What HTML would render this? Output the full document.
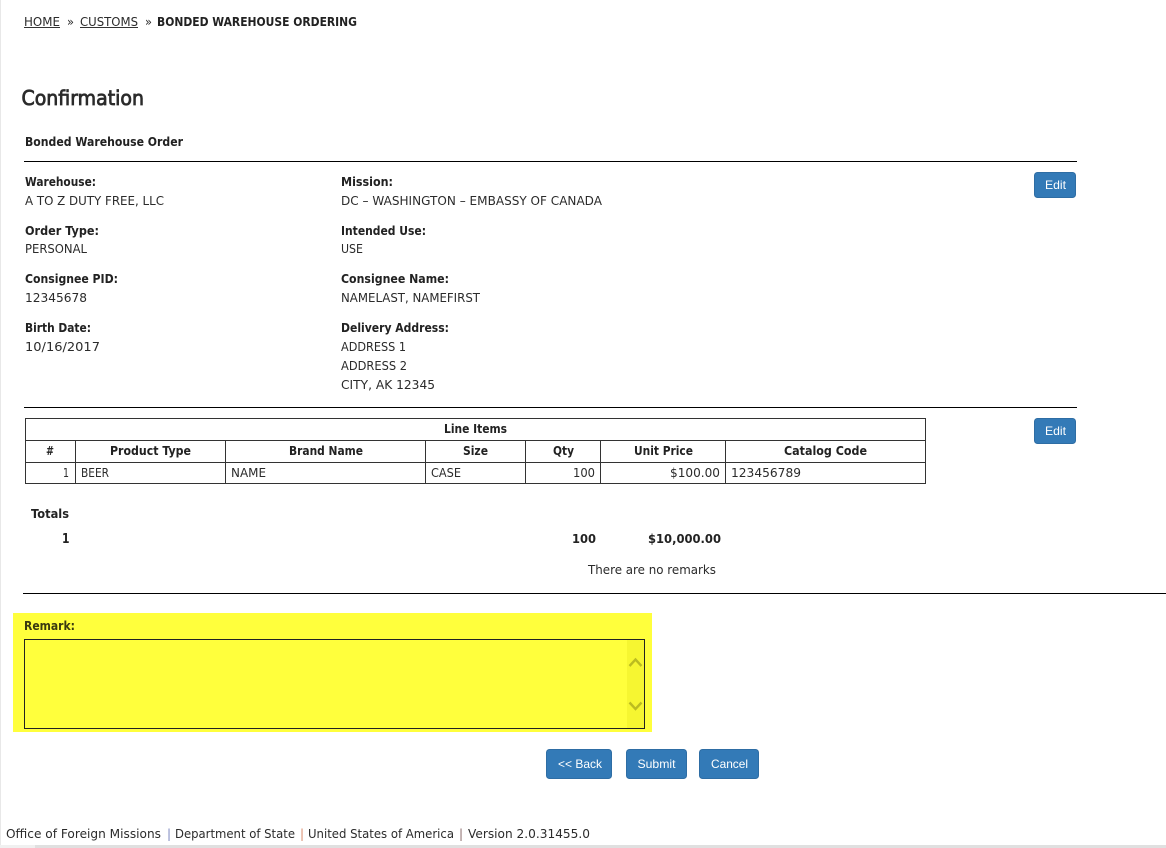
<!DOCTYPE html>
<html lang="en">
<head>
<meta charset="utf-8">
<title>Confirmation</title>
<style>
html,body{margin:0;padding:0;background:#fff;width:1166px;height:848px;overflow:hidden}
svg{display:block;position:absolute;left:0;top:0}
text{font-family:"DejaVu Sans",sans-serif;font-size:12px;fill:#2b2b2b}
.b{font-weight:bold;fill:#222}
.btn{font-family:"Liberation Sans",sans-serif;fill:#fff;font-size:12px}
.bt{fill:#337ab7;stroke:#2e6da4}
</style>
</head>
<body>
<svg width="1166" height="848" viewBox="0 0 1166 848" xmlns="http://www.w3.org/2000/svg">
<rect x="0" y="0" width="1" height="848" fill="#e8e8e8"/>
<rect x="0" y="845" width="1166" height="3" fill="#e0e0e0"/>
<rect x="0" y="845" width="35" height="3" fill="#f0f0f0"/>

<g>
<text x="24" y="26" textLength="36" lengthAdjust="spacingAndGlyphs">HOME</text>
<rect x="24" y="27" width="36" height="1" fill="#333"/>
<text x="67" y="26" textLength="7" lengthAdjust="spacingAndGlyphs" font-size="11">»</text>
<text x="80" y="26" textLength="58" lengthAdjust="spacingAndGlyphs">CUSTOMS</text>
<rect x="80" y="27" width="58" height="1" fill="#333"/>
<text x="145" y="26" textLength="7" lengthAdjust="spacingAndGlyphs" font-size="11">»</text>
<text class="b" x="157" y="26" textLength="200" lengthAdjust="spacingAndGlyphs">BONDED WAREHOUSE ORDERING</text>

<text x="21.500" y="105" textLength="122.500" lengthAdjust="spacingAndGlyphs" style="font-size:20px;fill:#2b2b2b;stroke:#2b2b2b;stroke-width:.8px">Confirmation</text>
<text class="b" x="25" y="146" textLength="158" lengthAdjust="spacingAndGlyphs">Bonded Warehouse Order</text>
<rect x="24" y="161" width="1053" height="1" fill="#000"/>

<text class="b" x="25" y="186" textLength="71" lengthAdjust="spacingAndGlyphs">Warehouse:</text>
<text x="25" y="205" textLength="139" lengthAdjust="spacingAndGlyphs">A TO Z DUTY FREE, LLC</text>
<text class="b" x="25" y="235" textLength="74" lengthAdjust="spacingAndGlyphs">Order Type:</text>
<text x="25" y="253" textLength="62" lengthAdjust="spacingAndGlyphs">PERSONAL</text>
<text class="b" x="25" y="283" textLength="93" lengthAdjust="spacingAndGlyphs">Consignee PID:</text>
<text x="25" y="302" textLength="62" lengthAdjust="spacingAndGlyphs">12345678</text>
<text class="b" x="25" y="332" textLength="66" lengthAdjust="spacingAndGlyphs">Birth Date:</text>
<text x="25" y="351" textLength="75" lengthAdjust="spacingAndGlyphs">10/16/2017</text>

<text class="b" x="341" y="186" textLength="52" lengthAdjust="spacingAndGlyphs">Mission:</text>
<text x="341" y="205" textLength="261" lengthAdjust="spacingAndGlyphs">DC – WASHINGTON – EMBASSY OF CANADA</text>
<text class="b" x="341" y="235" textLength="85" lengthAdjust="spacingAndGlyphs">Intended Use:</text>
<text x="341" y="253" textLength="22" lengthAdjust="spacingAndGlyphs">USE</text>
<text class="b" x="341" y="283" textLength="108" lengthAdjust="spacingAndGlyphs">Consignee Name:</text>
<text x="341" y="302" textLength="139" lengthAdjust="spacingAndGlyphs">NAMELAST, NAMEFIRST</text>
<text class="b" x="341" y="332" textLength="108" lengthAdjust="spacingAndGlyphs">Delivery Address:</text>
<text x="341" y="351" textLength="65" lengthAdjust="spacingAndGlyphs">ADDRESS 1</text>
<text x="341" y="370" textLength="66" lengthAdjust="spacingAndGlyphs">ADDRESS 2</text>
<text x="341" y="389" textLength="94" lengthAdjust="spacingAndGlyphs">CITY, AK 12345</text>

<rect x="1034.500" y="172.500" width="41" height="25" rx="3" class="bt"/>
<text class="btn" x="1045" y="189" textLength="21" lengthAdjust="spacingAndGlyphs">Edit</text>
<rect x="24" y="407" width="1053" height="1" fill="#000"/>
<rect x="1034.500" y="418.500" width="41" height="25" rx="3" class="bt"/>
<text class="btn" x="1045" y="435" textLength="21" lengthAdjust="spacingAndGlyphs">Edit</text>

<g fill="#333">
<rect x="25" y="418" width="901" height="1"/>
<rect x="25" y="440" width="901" height="1"/>
<rect x="25" y="462" width="901" height="1"/>
<rect x="25" y="483" width="901" height="1"/>
<rect x="25" y="418" width="1" height="66"/>
<rect x="925" y="418" width="1" height="66"/>
<rect x="75" y="440" width="1" height="44"/>
<rect x="225" y="440" width="1" height="44"/>
<rect x="425" y="440" width="1" height="44"/>
<rect x="525" y="440" width="1" height="44"/>
<rect x="600" y="440" width="1" height="44"/>
<rect x="725" y="440" width="1" height="44"/>
</g>
<text class="b" x="444" y="433" textLength="63" lengthAdjust="spacingAndGlyphs">Line Items</text>
<text class="b" x="46" y="455" textLength="8" lengthAdjust="spacingAndGlyphs">#</text>
<text class="b" x="110" y="455" textLength="81" lengthAdjust="spacingAndGlyphs">Product Type</text>
<text class="b" x="289" y="455" textLength="74" lengthAdjust="spacingAndGlyphs">Brand Name</text>
<text class="b" x="463" y="455" textLength="25" lengthAdjust="spacingAndGlyphs">Size</text>
<text class="b" x="553" y="455" textLength="21" lengthAdjust="spacingAndGlyphs">Qty</text>
<text class="b" x="634" y="455" textLength="59" lengthAdjust="spacingAndGlyphs">Unit Price</text>
<text class="b" x="784" y="455" textLength="83" lengthAdjust="spacingAndGlyphs">Catalog Code</text>
<text x="63" y="477" textLength="6" lengthAdjust="spacingAndGlyphs">1</text>
<text x="81" y="477" textLength="28" lengthAdjust="spacingAndGlyphs">BEER</text>
<text x="231" y="477" textLength="35" lengthAdjust="spacingAndGlyphs">NAME</text>
<text x="431" y="477" textLength="30" lengthAdjust="spacingAndGlyphs">CASE</text>
<text x="573" y="477" textLength="22" lengthAdjust="spacingAndGlyphs">100</text>
<text x="670" y="477" textLength="50" lengthAdjust="spacingAndGlyphs">$100.00</text>
<text x="731" y="477" textLength="70" lengthAdjust="spacingAndGlyphs">123456789</text>

<text class="b" x="31" y="518" textLength="38" lengthAdjust="spacingAndGlyphs">Totals</text>
<text class="b" x="62" y="543" textLength="7.500" lengthAdjust="spacingAndGlyphs" style="font-size:13px">1</text>
<text class="b" x="572" y="543" textLength="24" lengthAdjust="spacingAndGlyphs">100</text>
<text class="b" x="648" y="543" textLength="73" lengthAdjust="spacingAndGlyphs">$10,000.00</text>
<text x="588" y="574" textLength="128" lengthAdjust="spacingAndGlyphs">There are no remarks</text>
<rect x="23" y="593" width="1143" height="1" fill="#000"/>

<rect x="13" y="613" width="639" height="119" fill="#ffff3c"/>
<text class="b" x="24" y="630" textLength="51" lengthAdjust="spacingAndGlyphs" style="fill:#3a3a10">Remark:</text>
<rect x="627" y="640" width="17" height="88" fill="#f6f631"/>
<rect x="24.500" y="639.500" width="620" height="89" fill="none" stroke="#222"/>
<path d="M629.500 666 L635.500 659.500 L641.500 666" fill="none" stroke="#bcbc20" stroke-width="2.400"/>
<path d="M629.500 702.500 L635.500 709 L641.500 702.500" fill="none" stroke="#bcbc20" stroke-width="2.400"/>

<rect x="546.500" y="749.500" width="65" height="29" rx="3" class="bt"/>
<text class="btn" x="558" y="768" textLength="44" lengthAdjust="spacingAndGlyphs">&lt;&lt; Back</text>
<rect x="626.500" y="749.500" width="60" height="29" rx="3" class="bt"/>
<text class="btn" x="637.500" y="768" textLength="38" lengthAdjust="spacingAndGlyphs">Submit</text>
<rect x="699.500" y="749.500" width="59" height="29" rx="3" class="bt"/>
<text class="btn" x="711" y="768" textLength="37" lengthAdjust="spacingAndGlyphs">Cancel</text>

<text x="6" y="838" textLength="155" lengthAdjust="spacingAndGlyphs">Office of Foreign Missions</text>
<text x="167" y="838" style="fill:#7b86c0">|</text>
<text x="175" y="838" textLength="120" lengthAdjust="spacingAndGlyphs">Department of State</text>
<text x="300" y="838" style="fill:#d98a6a">|</text>
<text x="308" y="838" textLength="146" lengthAdjust="spacingAndGlyphs">United States of America</text>
<text x="459" y="838" style="fill:#8a6a6a">|</text>
<text x="468" y="838" textLength="122" lengthAdjust="spacingAndGlyphs">Version 2.0.31455.0</text>
</g>
</svg>
</body>
</html>
